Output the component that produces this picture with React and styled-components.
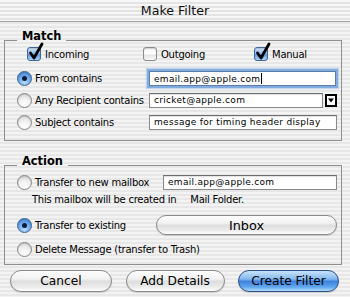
import React from "react";
import styled, { createGlobalStyle, css } from "styled-components";

const stripes = css`
  background: repeating-linear-gradient(to bottom, #f3f3f3 0px, #f3f3f3 2px, #e7e7e7 2px, #e7e7e7 4px);
  background-attachment: fixed;
`;

const GlobalStyle = createGlobalStyle`
  html, body {
    margin: 0;
    padding: 0;
  }
  body {
    width: 350px;
    height: 297px;
    overflow: hidden;
    font-family: "DejaVu Sans", "Lucida Grande", sans-serif;
    color: #000;
    ${stripes}
  }
`;

const Window = styled.div`
  width: 350px;
  height: 297px;
  display: flex;
  flex-direction: column;
`;

const TitleBar = styled.div`
  height: 21px;
  border-bottom: 1px solid #a3a3a3;
  display: flex;
  align-items: center;
  justify-content: center;
  font-size: 12.6px;
  color: #111;
  background: repeating-linear-gradient(to bottom, #f7f7f7 0px, #f7f7f7 2px, #e3e3e3 2px, #e3e3e3 4px);
`;

const Body = styled.div`
  display: flex;
  flex-direction: column;
  padding: 0 8px 0 4px;
`;

const Group = styled.section`
  position: relative;
  margin-top: ${(p) => p.$mt}px;
  border: 1px solid #8f8f8f;
  display: flex;
  flex-direction: column;
  padding: ${(p) => p.$pt}px 4px ${(p) => p.$pb}px 12px;
`;

const GroupTitle = styled.span`
  position: absolute;
  left: 12px;
  top: -13px;
  padding: 0 5px;
  font-weight: bold;
  font-size: 11.4px;
  line-height: 16px;
  ${stripes}
`;

const Row = styled.div`
  display: flex;
  align-items: center;
  height: ${(p) => p.$h || 16}px;
  margin-top: ${(p) => p.$mt || 0}px;
  padding-left: ${(p) => p.$pl || 0}px;
`;

const Label = styled.span`
  font-size: 10px;
  letter-spacing: -0.25px;
  white-space: nowrap;
`;

const CheckItem = styled.label`
  display: flex;
  align-items: center;
  gap: 4px;
  flex-shrink: 0;
  width: ${(p) => (p.$w ? `${p.$w}px` : "auto")};
`;

const CheckBox = styled.span`
  position: relative;
  flex-shrink: 0;
  width: 12px;
  height: 12px;
  border-radius: 3px;
  border: 1px solid ${(p) => (p.$on ? "#3f6695" : "#8a8a8a")};
  background: ${(p) =>
    p.$on
      ? "linear-gradient(to bottom, #d2e6fb 0%, #8cbcf0 45%, #5f9ee6 55%, #a9d3fa 100%)"
      : "linear-gradient(to bottom, #f4f4f4 0%, #ffffff 45%, #e6e6e6 60%, #fafafa 100%)"};
  box-shadow: inset 0 1px 1px rgba(0, 0, 0, 0.15);
`;

const Check = styled.svg`
  position: absolute;
  left: 0px;
  top: -5px;
  width: 15px;
  height: 17px;
  overflow: visible;
`;

const RadioItem = styled.label`
  display: flex;
  align-items: center;
  gap: 3px;
  width: ${(p) => (p.$w ? `${p.$w}px` : "auto")};
  flex-shrink: 0;
`;

const RadioDot = styled.span`
  width: 13px;
  height: 13px;
  border-radius: 50%;
  flex-shrink: 0;
  display: flex;
  align-items: center;
  justify-content: center;
  border: 1px solid ${(p) => (p.$on ? "#36608f" : "#858585")};
  background: ${(p) =>
    p.$on
      ? "radial-gradient(circle at 50% 80%, #b7dcfc 0%, #6ea8ec 50%, #3d7fd5 100%)"
      : "radial-gradient(circle at 50% 85%, #ffffff 0%, #f2f2f2 45%, #d2d2d2 100%)"};
  box-shadow: inset 0 1px 1px rgba(0, 0, 0, 0.12);

  &::after {
    content: "";
    display: ${(p) => (p.$on ? "block" : "none")};
    width: 5px;
    height: 5px;
    border-radius: 50%;
    background: #0d1c38;
  }
`;

const Field = styled.div`
  height: 13px;
  flex: 1;
  margin-right: ${(p) => p.$mr || 0}px;
  display: flex;
  align-items: center;
  padding: 0 4px;
  background: #fff;
  border: 1px solid #8a8a8a;
  border-top-color: #6c6c6c;
  box-shadow: inset 0 1px 1px rgba(0, 0, 0, 0.12);
  font-size: 9px;
  letter-spacing: 0.3px;
  white-space: nowrap;
  overflow: hidden;

  ${(p) =>
    p.$focus &&
    css`
      border-color: #5b7ea8;
      box-shadow: 0 0 0 2px rgba(110, 160, 220, 0.75), 0 0 1px 3px rgba(140, 180, 230, 0.45);
    `}
`;

const Caret = styled.span`
  width: 1px;
  height: 11px;
  background: #000;
  margin-left: 1px;
`;

const PopArrow = styled.svg`
  width: 12px;
  height: 13px;
  margin-left: 2px;
  flex-shrink: 0;
`;

const Note = styled.div`
  display: flex;
  align-items: center;
  height: 14px;
  margin-top: 2px;
  padding-left: 15px;
`;

const NoteTail = styled(Label)`
  margin-left: 14px;
`;

const aqua = css`
  border-radius: 11px;
  border: 1px solid #8a8a8a;
  background: linear-gradient(
    to bottom,
    #fdfdfd 0%,
    #f1f1f1 40%,
    #dedede 52%,
    #ebebeb 80%,
    #ffffff 100%
  );
  box-shadow: 0 1px 1px rgba(0, 0, 0, 0.15);
  display: flex;
  align-items: center;
  justify-content: center;
  color: #000;
`;

const PopupButton = styled.div`
  ${aqua}
  height: 18px;
  width: 179px;
  margin-left: auto;
  font-size: 12.8px;
`;

const ButtonBar = styled.div`
  display: flex;
  justify-content: space-between;
  margin-top: 5px;
  padding: 0 3px 0 6px;
`;

const Button = styled.div`
  ${aqua}
  height: 20px;
  width: ${(p) => p.$w}px;
  font-size: 12.2px;

  ${(p) =>
    p.$primary &&
    css`
      border-color: #284f8c;
      background: linear-gradient(
        to bottom,
        #c9e2fb 0%,
        #84b8f0 40%,
        #3f82dc 52%,
        #5fa6ef 80%,
        #b3dcfc 100%
      );
    `}
`;

const Checkbox = ({ checked, label, width }) => (
  <CheckItem $w={width}>
    <CheckBox $on={checked}>
      {checked && (
        <Check viewBox="0 0 15 17">
          <path d="M2.5 10 L6 15 L14 1" fill="none" stroke="#000" strokeWidth="2.8" strokeLinecap="round" strokeLinejoin="round" />
        </Check>
      )}
    </CheckBox>
    <Label>{label}</Label>
  </CheckItem>
);

const Radio = ({ on, label, width }) => (
  <RadioItem $w={width}>
    <RadioDot $on={on} />
    <Label>{label}</Label>
  </RadioItem>
);

const App = () => (
  <>
    <GlobalStyle />
    <Window>
      <TitleBar>Make Filter</TitleBar>
      <Body>
        <Group $mt={18} $pt={5} $pb={10}>
          <GroupTitle>Match</GroupTitle>
          <Row $pl={10}>
            <Checkbox checked label="Incoming" width={116} />
            <Checkbox label="Outgoing" width={111} />
            <Checkbox checked label="Manual" />
          </Row>
          <Row $h={17} $mt={8}>
            <Radio on label="From contains" width={132} />
            <Field $focus $mr={1}>
              email.app@apple.com
              <Caret />
            </Field>
          </Row>
          <Row $mt={5}>
            <Radio label="Any Recipient contains" width={132} />
            <Field>cricket@apple.com</Field>
            <PopArrow viewBox="0 0 12 13">
              <rect x="1" y="1" width="10" height="11" fill="#fff" stroke="#000" strokeWidth="2" />
              <polygon points="3,4.5 9,4.5 6,8.5" fill="#000" />
            </PopArrow>
          </Row>
          <Row $mt={6}>
            <Radio label="Subject contains" width={132} />
            <Field>message for timing header display</Field>
          </Row>
        </Group>

        <Group $mt={24} $pt={8} $pb={7}>
          <GroupTitle>Action</GroupTitle>
          <Row>
            <Radio label="Transfer to new mailbox" width={146} />
            <Field>email.app@apple.com</Field>
          </Row>
          <Note>
            <Label>This mailbox will be created in</Label>
            <NoteTail>Mail Folder.</NoteTail>
          </Note>
          <Row $h={20} $mt={9}>
            <Radio on label="Transfer to existing" />
            <PopupButton>Inbox</PopupButton>
          </Row>
          <Row $mt={6}>
            <Radio label="Delete Message (transfer to Trash)" />
          </Row>
        </Group>

        <ButtonBar>
          <Button $w={100}>Cancel</Button>
          <Button $w={97}>Add Details</Button>
          <Button $w={99} $primary>
            Create Filter
          </Button>
        </ButtonBar>
      </Body>
    </Window>
  </>
);

export default App;
